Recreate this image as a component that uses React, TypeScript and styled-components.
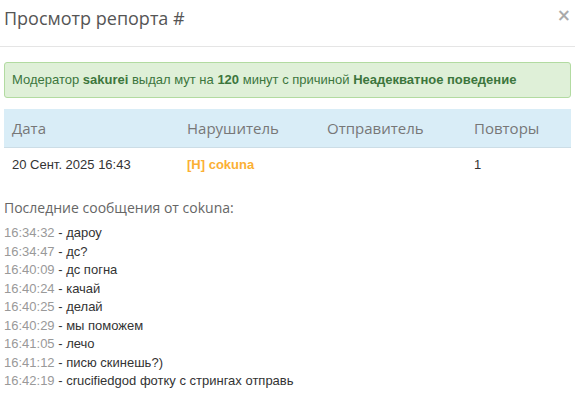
import React from "react";
import styled, { createGlobalStyle } from "styled-components";

const Global = createGlobalStyle`
  html, body { margin: 0; padding: 0; background: #fff; }
  body { font-family: "Liberation Sans", Arial, sans-serif; font-size: 13px; color: #333; }
  * { box-sizing: border-box; }
`;

const Modal = styled.div`
  width: 575px;
  background: #fff;
`;

const Header = styled.div`
  display: flex;
  align-items: flex-start;
  justify-content: space-between;
  padding: 5px 4px 15px 4px;
  border-bottom: 1px solid #e5e5e5;
`;

const Title = styled.h4`
  margin: 0;
  font-family: "Open Sans", sans-serif;
  font-weight: 400;
  font-size: 18px;
  line-height: 26px;
  color: #555;
`;

const Close = styled.button`
  border: 0;
  background: none;
  padding: 0;
  margin: 2px 0 0 0;
  font-family: "DejaVu Sans", sans-serif;
  font-size: 17px;
  font-weight: 700;
  line-height: 1;
  color: #000;
  opacity: 0.33;
  cursor: pointer;
`;

const Body = styled.div`
  padding: 15px 4px 0 4px;
`;

const Alert = styled.div`
  background: #dff0d8;
  border: 1px solid #b2dba1;
  border-radius: 3px;
  color: #3c763d;
  padding: 9px 7px;
  font-size: 13px;
  line-height: 16px;
  margin-bottom: 11px;
`;

const Table = styled.table`
  width: 100%;
  border-collapse: collapse;
  margin-bottom: 17px;
`;

const Th = styled.th<{ $w: number }>`
  width: ${(p) => p.$w}px;
  text-align: left;
  background: #d9edf7;
  font-family: "Open Sans", sans-serif;
  font-weight: 400;
  font-size: 15px;
  color: #777;
  padding: 0 8px;
  height: 38px;
  border-bottom: 1px solid #ccdde6;
`;

const Td = styled.td`
  padding: 0 8px;
  height: 34px;
  font-size: 13px;
  color: #333;
`;

const Nick = styled.span`
  color: #fbb034;
  font-weight: 700;
`;

const SectionTitle = styled.div`
  font-family: "Open Sans", sans-serif;
  font-size: 14px;
  color: #666;
  line-height: 20px;
  margin-bottom: 6px;
`;

const MsgList = styled.div`
  display: flex;
  flex-direction: column;
`;

const Msg = styled.div`
  font-size: 13px;
  line-height: 18.5px;
  color: #333;
`;

const Time = styled.span`
  color: #999;
`;

const messages: [string, string][] = [
  ["16:34:32", "дароу"],
  ["16:34:47", "дс?"],
  ["16:40:09", "дс погна"],
  ["16:40:24", "качай"],
  ["16:40:25", "делай"],
  ["16:40:29", "мы поможем"],
  ["16:41:05", "лечо"],
  ["16:41:12", "писю скинешь?)"],
  ["16:42:19", "crucifiedgod фотку с стрингах отправь"],
];

export default function App() {
  return (
    <Modal>
      <Global />
      <Header>
        <Title>Просмотр репорта #</Title>
        <Close>×</Close>
      </Header>
      <Body>
        <Alert>
          Модератор <b>sakurei</b> выдал мут на <b>120</b> минут с причиной{" "}
          <b>Неадекватное поведение</b>
        </Alert>
        <Table>
          <thead>
            <tr>
              <Th $w={175}>Дата</Th>
              <Th $w={140}>Нарушитель</Th>
              <Th $w={147}>Отправитель</Th>
              <Th $w={105}>Повторы</Th>
            </tr>
          </thead>
          <tbody>
            <tr>
              <Td>20 Сент. 2025 16:43</Td>
              <Td>
                <Nick>[H] cokuna</Nick>
              </Td>
              <Td></Td>
              <Td>1</Td>
            </tr>
          </tbody>
        </Table>
        <SectionTitle>Последние сообщения от cokuna:</SectionTitle>
        <MsgList>
          {messages.map(([t, m]) => (
            <Msg key={t}>
              <Time>{t}</Time> - {m}
            </Msg>
          ))}
        </MsgList>
      </Body>
    </Modal>
  );
}
